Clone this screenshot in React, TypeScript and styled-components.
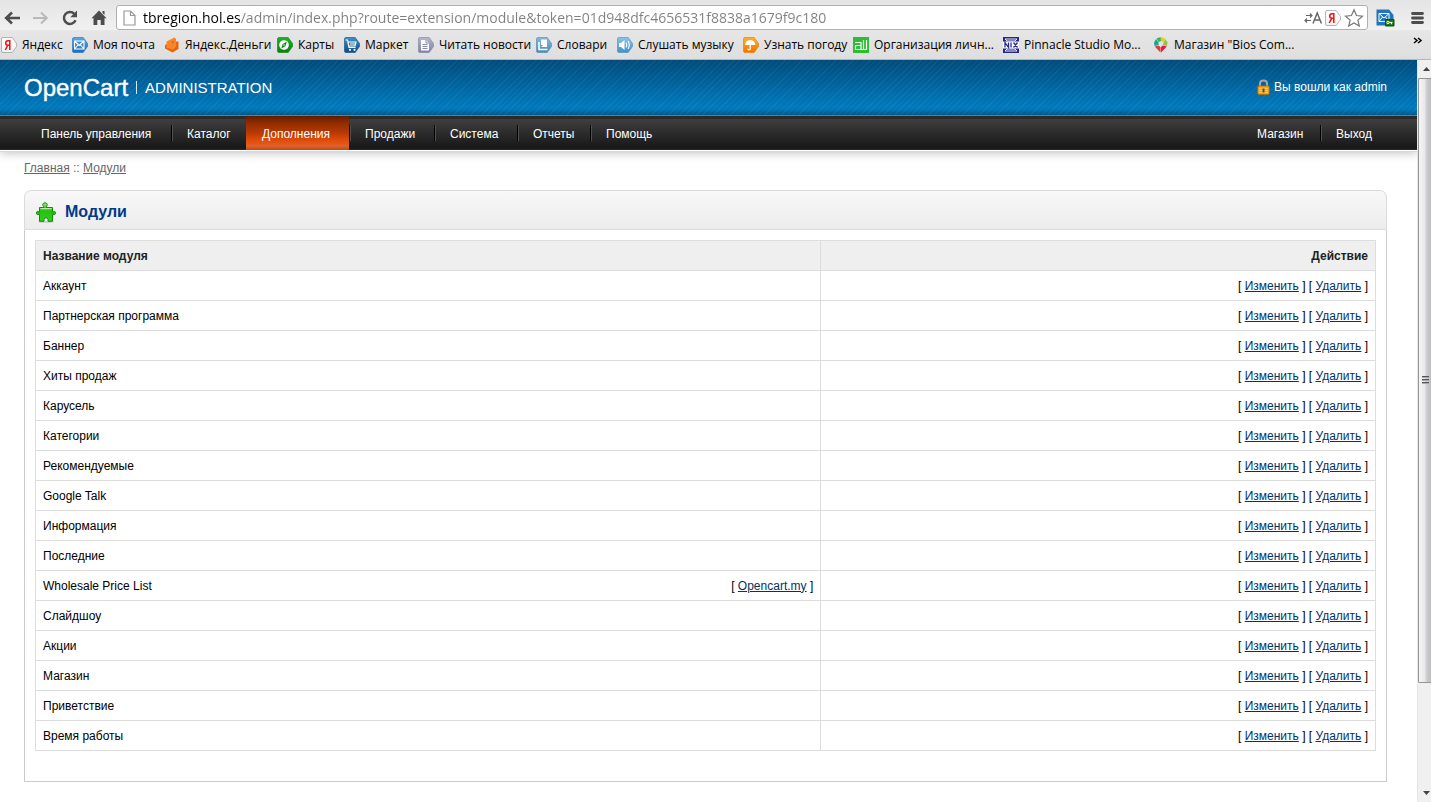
import React from "react";
import styled, { createGlobalStyle, css } from "styled-components";

const GlobalStyle = createGlobalStyle`
  * { box-sizing: border-box; }
  body {
    margin: 0;
    background: #fff;
    color: #000;
    font: 12px/16px "Liberation Sans", Arial, sans-serif;
  }
  button { border: 0; padding: 0; background: none; font: inherit; }
`;

const Window = styled.div`
  display: flex;
  flex-direction: column;
  min-height: 100vh;
`;

/* ---------- browser chrome ---------- */

const Chrome = styled.div`
  height: 60px;
  background: linear-gradient(#e4e4e4, #f1f1f1 50%, #e6e6e6 52%, #dedede);
  border-bottom: 1px solid #b4b4b4;
  font-family: "Open Sans", "Noto Sans", sans-serif;
`;

const Toolbar = styled.div`
  display: flex;
  align-items: center;
  gap: 6px;
  height: 32px;
  padding: 3px 2px 0 0;
`;

const ToolButton = styled.button`
  display: flex;
  align-items: center;
  justify-content: center;
  width: 23px;
  height: 24px;
  color: ${(p: { $muted?: boolean }) => (p.$muted ? "#b9b9b9" : "#4d4d4d")};
`;

const ToolGroup = styled.div`
  display: flex;
  gap: 9px;
`;

const AddressBar = styled.div`
  display: flex;
  align-items: center;
  flex: 1;
  height: 25px;
  padding: 0 3px 0 6px;
  gap: 3px;
  background: #fff;
  border: 1px solid #b0b0b0;
  border-radius: 3px;
`;

const Address = styled.input`
  flex: 1;
  min-width: 0;
  height: 23px;
  border: 0;
  padding: 0 0 0 4px;
  outline: 0;
  font: 14px/20px "Open Sans", "Noto Sans", sans-serif;
  color: transparent;
  background: linear-gradient(90deg, #000 102px, #808080 102px);
  -webkit-background-clip: text;
  background-clip: text;
`;

const Bookmarks = styled.nav`
  display: flex;
  align-items: center;
  height: 26px;
  padding: 0 6px 0 1px;
`;

const Bookmark = styled.a<{ $width: number }>`
  display: flex;
  align-items: center;
  gap: 5px;
  flex: 0 0 ${(p) => p.$width}px;
  white-space: nowrap;
  color: #000;
  text-decoration: none;
  font-size: 12px;
  line-height: 18px;
  svg { flex: none; }
`;

const MoreBookmarks = styled.button`
  display: flex;
  align-items: center;
  justify-content: center;
  align-self: flex-start;
  margin-left: auto;
  height: 18px;
  width: 14px;
`;

/* ---------- viewport ---------- */

const Viewport = styled.div`
  display: flex;
  flex: 1;
`;

const Page = styled.div`
  flex: 1;
  min-width: 0;
`;

const Header = styled.header`
  display: flex;
  align-items: center;
  justify-content: space-between;
  height: 56px;
  padding: 0 30px 0 24px;
  color: #fff;
  border-bottom: 1px solid #4190c4;
  background:
    repeating-linear-gradient(135deg, transparent 0 3px, rgba(255, 255, 255, 0.05) 3px 4px),
    linear-gradient(#004c7c, #0079bd 85%, #0074b5 91%, #005c90);
`;

const Brand = styled.div`
  display: flex;
  align-items: center;
  gap: 8px;
`;

const BrandName = styled.span`
  font-size: 24px;
  line-height: 28px;
  -webkit-text-stroke: 0.4px #fff;
`;

const BrandRule = styled.span`
  width: 1px;
  height: 13px;
  background: #d6e7f2;
`;

const BrandArea = styled.span`
  font-size: 15px;
  line-height: 20px;
`;

const Login = styled.div`
  display: flex;
  align-items: center;
  gap: 4px;
  padding-bottom: 2px;
`;

const Menu = styled.nav`
  display: flex;
  justify-content: space-between;
  height: 34px;
  padding: 0 30px 0 25px;
  background: linear-gradient(#2b2b2b 0 3px, #3f3f3f 3px, #171717 32px, #2a2a2a);
  box-shadow: 0 1px 0 #fff, 0 2px 0 #d8d8d8, 0 3px 9px rgba(0, 0, 0, 0.25);
`;

const MenuList = styled.ul`
  display: flex;
  margin: 0;
  padding: 0;
  list-style: none;
`;

const MenuItem = styled.li<{ $width: number }>`
  min-width: ${(p) => p.$width}px;
  &:not(:first-child) {
    background: linear-gradient(90deg, #000 1px, #505050 1px) 0 9px / 2px 16px no-repeat;
  }
`;

const MenuLink = styled.a<{ $active?: boolean }>`
  display: block;
  height: 34px;
  padding: 0 12px 0 16px;
  line-height: 36px;
  color: #fff;
  text-decoration: none;
  white-space: nowrap;
  ${(p) => p.$active && css`
    background: linear-gradient(#5c1c00, #8c2b00 6px, #b93a03 17px, #e04b06 24px, #e0602a 30px, #b84a1a);
  `}
`;

const Content = styled.main`
  padding: 10px 30px 20px 24px;
`;

const Breadcrumb = styled.nav`
  margin-bottom: 14px;
  color: #666;
  a { color: #666; }
`;

const Box = styled.section``;

const BoxHead = styled.div`
  display: flex;
  align-items: center;
  gap: 9px;
  height: 40px;
  padding: 4px 11px 0;
  border: 1px solid #dbdbdb;
  border-radius: 7px 7px 0 0;
  background: linear-gradient(#f8f8f8, #ececec);
  h1 {
    margin: 0;
    font-size: 16px;
    line-height: 20px;
    color: #003a88;
  }
`;

const BoxBody = styled.div`
  padding: 10px 10px 30px;
  border: 1px solid #ccc;
  border-top: 0;
`;

const ModuleTable = styled.table`
  width: 100%;
  border-collapse: collapse;
  table-layout: fixed;
  th, td {
    height: 30px;
    padding: 0 7px;
    border: 1px solid #ddd;
    text-align: left;
  }
  th { background: #efefef; color: #222; }
  th:first-child { width: 58.6%; }
  th:last-child, td:last-child { text-align: right; }
  a { color: #003366; }
`;

const NameCell = styled.div`
  display: flex;
  justify-content: space-between;
`;

/* ---------- scroll bar ---------- */

const ScrollBar = styled.div`
  display: flex;
  flex-direction: column;
  width: 14px;
  background: #f0f0f0;
  border-left: 1px solid #e6e6e6;
`;

const ScrollButton = styled.button`
  display: flex;
  align-items: center;
  justify-content: center;
  height: 18px;
  padding-left: 3px;
`;

const Thumb = styled.div`
  display: flex;
  align-items: center;
  justify-content: center;
  flex: 6;
  padding-left: 2px;
  border: 1px solid #959595;
  border-right: 0;
  border-radius: 2px 0 0 2px;
  background: linear-gradient(90deg, #f6f6f6, #e8e8ea 50%, #cfcfd4 60%, #bcbcc2);
`;

const ThumbRest = styled.div`
  flex: 1;
`;

/* ---------- drawings ---------- */

function Tag({ id, from, to, stroke, children }: { id: string; from: string; to: string; stroke?: string; children: React.ReactNode }) {
  return (
    <svg width="16" height="16" viewBox="0 0 16 16">
      <linearGradient id={id} x2="0" y2="1">
        <stop stopColor={from} />
        <stop offset="1" stopColor={to} />
      </linearGradient>
      <path d="M2 .5h9.2l4.300 6v3l-4.300 6H2Q.5 15.500.5 14V2Q.5.5 2 .5Z" fill={`url(#${id})`} stroke={stroke ?? to} strokeWidth=".6" />
      {children}
    </svg>
  );
}

const YaLetter = () => (
  <path d="M8.800 3v10M8.800 3.700H6.800Q4.700 3.900 4.700 6T6.800 8.200H8.800M6.800 8.200L4.300 13" fill="none" stroke="#e8141c" strokeWidth="1.500" />
);

const YandexIcon = () => <Tag id="ya" from="#ffffff" to="#f2f2f2" stroke="#888"><YaLetter /></Tag>;

const MailIcon = () => (
  <Tag id="mail" from="#5aa8e6" to="#1f6cb8">
    <path d="M2.500 4h9.500v8H2.500ZM2.500 4l4.700 4.500L12 4M2.500 12l3.500-4M12 12L8.500 8" fill="none" stroke="#fff" strokeWidth="1.100" />
  </Tag>
);

const MoneyIcon = () => (
  <svg width="16" height="16" viewBox="0 0 16 16">
    <path d="M1 11.500V8L3 7v3.500l6 1.500 3-3V4.500h2.500V12L8.500 15.500Z" fill="#e8650c" />
    <path d="M2.500 4.500L10.500.5 12 2v7.500L8.500 12.500l-6-2Z" fill="#fa8526" />
    <path d="M8 5.500l1.500-.7" stroke="#a84300" />
  </svg>
);

const MapsIcon = () => (
  <Tag id="maps" from="#1fb02a" to="#08810f">
    <circle cx="7" cy="8" r="4.800" fill="#fff" />
    <path d="M9.800 4.700L8.400 9.200 4.300 11.400 5.600 7Z" fill="#0a8b12" />
    <circle cx="7" cy="8" r=".8" fill="#fff" />
  </Tag>
);

const MarketIcon = () => (
  <Tag id="market" from="#3f8fc6" to="#0f4c80">
    <path d="M1.500 3h2l1.500 7.500h6.500M4 5h8l-1 4H5M6 7h5" fill="none" stroke="#fff" strokeWidth="1.200" />
    <circle cx="6" cy="12.800" r="1.100" fill="#fff" />
    <circle cx="10.500" cy="12.800" r="1.100" fill="#fff" />
  </Tag>
);

const NewsIcon = () => (
  <Tag id="news" from="#b4b9d0" to="#7a81a4">
    <path d="M3 3h5l3 3v7.500H3Z" fill="#fff" />
    <path d="M8 3v3h3M4.500 7.500h5M4.500 9.500h5M4.500 11.500h5" fill="none" stroke="#858bab" />
  </Tag>
);

const DictIcon = () => (
  <Tag id="dict" from="#86b8dc" to="#4a8abb">
    <path d="M5 2.500h6v7.500H5Z" fill="#fff" />
    <path d="M3 5v7.500h8.500M3 12.500V6" fill="none" stroke="#fff" strokeWidth="1.600" />
    <path d="M6.500 8.500H5V10" fill="none" stroke="#5e9ac7" />
  </Tag>
);

const MusicIcon = () => (
  <Tag id="music" from="#8bc4e8" to="#4390c8">
    <path d="M2 6h2.200L7.500 3v10L4.200 10H2Z" fill="#fff" />
    <path d="M9 5.500q1.600 2.500 0 5M11 4q2.600 4 0 8" fill="none" stroke="#fff" strokeWidth="1.100" />
  </Tag>
);

const WeatherIcon = () => (
  <Tag id="weather" from="#ffb02a" to="#ee7500">
    <path d="M2 8q.4-4.800 5.200-5 4.800.2 5.200 5Z" fill="#fff" />
    <path d="M7.200 7v4.500q0 1.300-1.200 1.300t-1.200-1" fill="none" stroke="#fff" strokeWidth="1.300" />
  </Tag>
);

const AllIcon = () => (
  <svg width="16" height="16" viewBox="0 0 16 16">
    <path d="M0 0h16v16H0Z" fill="#2dbd32" />
    <path d="M2 5.500h6v7H2.500v-4H8M10.500 3v9.500M13.500 3v9.500M8 12.500h6" fill="none" stroke="#fff" strokeWidth="1.200" />
  </svg>
);

const NixIcon = () => (
  <svg width="16" height="16" viewBox="0 0 16 16">
    <path d="M0 0h16v16H0Z" fill="#27278c" />
    <path d="M2 2h12L12 4H4ZM2 14h12l-2-2H4Z" fill="#27278c" stroke="#fff" strokeWidth=".9" />
    <path d="M0 4.500h16v7H0Z" fill="#fff" />
    <path d="M2 10.500v-5l3.500 5v-5M8 5.500v5M10.500 5.500l4 5M14.500 5.500l-4 5" fill="none" stroke="#27278c" strokeWidth="1.300" />
  </svg>
);

const BiosIcon = () => (
  <svg width="16" height="16" viewBox="0 0 16 16">
    <path d="M7.500 0L3.500 1.500 5.500 5 8 4Z" fill="#37b44a" />
    <path d="M8 0l4 1.500L10.500 5 8 4Z" fill="#f9c40f" />
    <path d="M3 2L1 5.500l.5 3.500 4-1V5.500Z" fill="#10a7a0" />
    <path d="M12.500 2l2 3.500L14 9l-4-1 .5-2.500Z" fill="#8fc93a" />
    <path d="M1.700 9.500l3.800-1L7.500 10v5.500Z" fill="#e23a2e" />
    <path d="M13.800 9.500L10 8.500 8 10v5.500Z" fill="#e0184c" />
  </svg>
);

const BackIcon = ({ flip }: { flip?: boolean }) => (
  <svg width="18" height="16" viewBox="0 0 18 16">
    <path d={flip ? "M1 8h13M9 2.500L14.800 8 9 13.500" : "M17 8H4M9 2.500L3.200 8 9 13.500"} fill="none" stroke="currentColor" strokeWidth={flip ? 2 : 2.600} />
  </svg>
);

const ReloadIcon = () => (
  <svg width="18" height="18" viewBox="0 0 18 18">
    <path d="M14.500 11.200A6 6 0 1 1 13.300 4.800" fill="none" stroke="currentColor" strokeWidth="2.500" />
    <path d="M16 1.500v6.700H9.300Z" fill="currentColor" />
  </svg>
);

const HomeIcon = () => (
  <svg width="16" height="16" viewBox="0 0 16 16">
    <path d="M8 .5L15.500 8.200h-2V15H9.700v-5H6.300v5H2.500V8.200h-2ZM11.500 1h2v4l-2-2Z" fill="currentColor" />
  </svg>
);

const FileIcon = () => (
  <svg width="13" height="16" viewBox="0 0 13 16">
    <path d="M1 1h6.500L12 5.500V15H1ZM7.500 1v4.500H12" fill="#fdfdfd" stroke="#999" strokeWidth="1.200" />
  </svg>
);

const TranslateIcon = () => (
  <svg width="18" height="16" viewBox="0 0 18 16">
    <path d="M2 5.500h6M6 3.500l2 2-2 2M7 10.500H1M3 8.500l-2 2 2 2" fill="none" stroke="#666" strokeWidth="1.200" />
    <path d="M9 13.500L13.200 3l4.200 10.500M10.500 10h5.400" fill="none" stroke="#666" strokeWidth="1.400" />
  </svg>
);

const StarIcon = () => (
  <svg width="20" height="20" viewBox="0 0 20 20">
    <path d="M10 1.800l2.500 5.700 6 .6-4.600 4 1.400 6L10 15l-5.300 3.100 1.400-6-4.600-4 6-.6Z" fill="#fff" stroke="#777" strokeWidth="1.200" />
  </svg>
);

const CheckerIcon = () => (
  <svg width="19" height="18" viewBox="0 0 19 18">
    <path d="M.5.5H13L17.500 6v10.500H.5Z" fill="#2275bd" />
    <path d="M3 4.500h10v8H3ZM3 4.500l5 4.500 5-4.500M3 12.500L6.500 8M13 12.500L9.500 8" fill="none" stroke="#fff" />
    <path d="M9.500 10.500H18V17H9.500Z" fill="#1f7a12" stroke="#0d5006" />
    <circle cx="12" cy="13.500" r="1.200" fill="none" stroke="#fff" />
    <path d="M13 13.500h3.500M15.500 13.500v1.700" stroke="#fff" />
  </svg>
);

const MenuIcon = () => (
  <svg width="13" height="14" viewBox="0 0 13 14">
    <path d="M1.500 2.500h10M1.500 7h10M1.500 11.500h10" stroke="#4d4d4d" strokeWidth="2.800" strokeLinecap="round" />
  </svg>
);

const ChevronsIcon = () => (
  <svg width="10" height="8" viewBox="0 0 10 8">
    <path d="M1 1l3 2.500L1 6M5 1l3 2.500L5 6" fill="none" stroke="#000" strokeWidth="1.500" />
  </svg>
);

const LockIcon = () => (
  <svg width="13" height="16" viewBox="0 0 13 16">
    <path d="M3 8V4.500Q3 1.500 6.500 1.500T10 4.500V8" fill="none" stroke="#a5a5a5" strokeWidth="2" />
    <rect x=".8" y="7" width="11.400" height="8.400" rx="1" fill="#f7a51c" stroke="#b86a00" strokeWidth=".8" />
    <path d="M2 9.500h9M2 11.500h9M2 13.500h9" stroke="#ffcf62" strokeWidth=".8" />
    <path d="M5.500 9.500h2v4h-2Z" fill="#7a4500" />
  </svg>
);

const PuzzleIcon = () => (
  <svg width="20" height="21" viewBox="0 0 20 21">
    <linearGradient id="puzzle" x2="0" y2="1">
      <stop stopColor="#a5e88c" />
      <stop offset=".45" stopColor="#25c20f" />
      <stop offset="1" stopColor="#35cc22" />
    </linearGradient>
    <ellipse cx="10" cy="20" rx="8" ry="1" fill="#d2d2d2" />
    <path
      d="M3.500 5.500H8V4.600Q6.500 3.800 6.700 2.500 7.200.8 9 .8T11.300 2.500Q11.500 3.800 10 4.600V5.500H16.500V10H17.200Q18 9 18.700 9.400 19.500 9.900 19.500 11T18.700 12.600Q18 13 17.200 12.200H16.500V19.300H12V17.500Q11.800 15.800 10 15.800T8 17.500V19.300H3.500V12.200H2.800Q2 13 1.200 12.600.5 12.100.5 11T1.200 9.400Q2 9 2.800 10H3.500Z"
      fill="url(#puzzle)"
      stroke="#128a08"
    />
    <path d="M4.500 6.600h11" stroke="#c4f3b4" />
  </svg>
);

const ArrowIcon = ({ down }: { down?: boolean }) => (
  <svg width="7" height="4" viewBox="0 0 7 4">
    <path d={down ? "M0 0h7L3.500 4Z" : "M0 4h7L3.500 0Z"} fill="#444" />
  </svg>
);

const GripIcon = () => (
  <svg width="8" height="9" viewBox="0 0 8 9">
    <path d="M0 .5h7M0 3.500h7M0 6.500h7" stroke="#555" />
    <path d="M0 1.500h7M0 4.500h7M0 7.500h7" stroke="#aaa" />
  </svg>
);

/* ---------- data ---------- */

const bookmarks = [
  { label: "Яндекс", width: 71, Icon: YandexIcon },
  { label: "Моя почта", width: 92, Icon: MailIcon },
  { label: "Яндекс.Деньги", width: 113, Icon: MoneyIcon },
  { label: "Карты", width: 67, Icon: MapsIcon },
  { label: "Маркет", width: 74, Icon: MarketIcon },
  { label: "Читать новости", width: 118, Icon: NewsIcon },
  { label: "Словари", width: 81, Icon: DictIcon },
  { label: "Слушать музыку", width: 126, Icon: MusicIcon },
  { label: "Узнать погоду", width: 110, Icon: WeatherIcon },
  { label: "Организация личн...", width: 150, Icon: AllIcon },
  { label: "Pinnacle Studio Mo...", width: 150, Icon: NixIcon },
  { label: 'Магазин "Bios Com...', width: 150, Icon: BiosIcon },
];

type MenuEntry = { label: string; width: number; active?: boolean };

const mainMenu: MenuEntry[] = [
  { label: "Панель управления", width: 146 },
  { label: "Каталог", width: 75 },
  { label: "Дополнения", width: 103, active: true },
  { label: "Продажи", width: 85 },
  { label: "Система", width: 83 },
  { label: "Отчеты", width: 73 },
  { label: "Помощь", width: 80 },
];

const sideMenu: MenuEntry[] = [
  { label: "Магазин", width: 79 },
  { label: "Выход", width: 67 },
];

const modules: { name: string; link?: string }[] = [
  { name: "Аккаунт" },
  { name: "Партнерская программа" },
  { name: "Баннер" },
  { name: "Хиты продаж" },
  { name: "Карусель" },
  { name: "Категории" },
  { name: "Рекомендуемые" },
  { name: "Google Talk" },
  { name: "Информация" },
  { name: "Последние" },
  { name: "Wholesale Price List", link: "Opencart.my" },
  { name: "Слайдшоу" },
  { name: "Акции" },
  { name: "Магазин" },
  { name: "Приветствие" },
  { name: "Время работы" },
];

function MenuGroup({ items }: { items: MenuEntry[] }) {
  return (
    <MenuList>
      {items.map(({ label, width, active }) => (
        <MenuItem key={label} $width={width}>
          <MenuLink href="#" $active={active}>{label}</MenuLink>
        </MenuItem>
      ))}
    </MenuList>
  );
}

export default function App() {
  return (
    <Window>
      <GlobalStyle />
      <Chrome>
        <Toolbar>
          <ToolButton aria-label="Назад"><BackIcon /></ToolButton>
          <ToolButton aria-label="Вперед" $muted><BackIcon flip /></ToolButton>
          <ToolButton aria-label="Обновить"><ReloadIcon /></ToolButton>
          <ToolButton aria-label="Домой"><HomeIcon /></ToolButton>
          <AddressBar>
            <FileIcon />
            <Address
              aria-label="Адрес"
              defaultValue="tbregion.hol.es/admin/index.php?route=extension/module&token=01d948dfc4656531f8838a1679f9c180"
            />
            <TranslateIcon />
            <YandexIcon />
            <StarIcon />
          </AddressBar>
          <ToolGroup>
            <ToolButton aria-label="Почта"><CheckerIcon /></ToolButton>
            <ToolButton aria-label="Меню"><MenuIcon /></ToolButton>
          </ToolGroup>
        </Toolbar>
        <Bookmarks>
          {bookmarks.map(({ label, width, Icon }) => (
            <Bookmark key={label} href="#" $width={width}>
              <Icon />
              {label}
            </Bookmark>
          ))}
          <MoreBookmarks aria-label="Другие закладки"><ChevronsIcon /></MoreBookmarks>
        </Bookmarks>
      </Chrome>
      <Viewport>
        <Page>
          <Header>
            <Brand>
              <BrandName>OpenCart</BrandName>
              <BrandRule />
              <BrandArea>ADMINISTRATION</BrandArea>
            </Brand>
            <Login>
              <LockIcon />
              Вы вошли как admin
            </Login>
          </Header>
          <Menu>
            <MenuGroup items={mainMenu} />
            <MenuGroup items={sideMenu} />
          </Menu>
          <Content>
            <Breadcrumb>
              <a href="#">Главная</a> :: <a href="#">Модули</a>
            </Breadcrumb>
            <Box>
              <BoxHead>
                <PuzzleIcon />
                <h1>Модули</h1>
              </BoxHead>
              <BoxBody>
                <ModuleTable>
                  <thead>
                    <tr>
                      <th>Название модуля</th>
                      <th>Действие</th>
                    </tr>
                  </thead>
                  <tbody>
                    {modules.map(({ name, link }) => (
                      <tr key={name}>
                        <td>
                          <NameCell>
                            <span>{name}</span>
                            {link && <span>[ <a href="#">{link}</a> ]</span>}
                          </NameCell>
                        </td>
                        <td>
                          [ <a href="#">Изменить</a> ] [ <a href="#">Удалить</a> ]
                        </td>
                      </tr>
                    ))}
                  </tbody>
                </ModuleTable>
              </BoxBody>
            </Box>
          </Content>
        </Page>
        <ScrollBar>
          <ScrollButton aria-label="Вверх"><ArrowIcon /></ScrollButton>
          <Thumb><GripIcon /></Thumb>
          <ThumbRest />
          <ScrollButton aria-label="Вниз"><ArrowIcon down /></ScrollButton>
        </ScrollBar>
      </Viewport>
    </Window>
  );
}
